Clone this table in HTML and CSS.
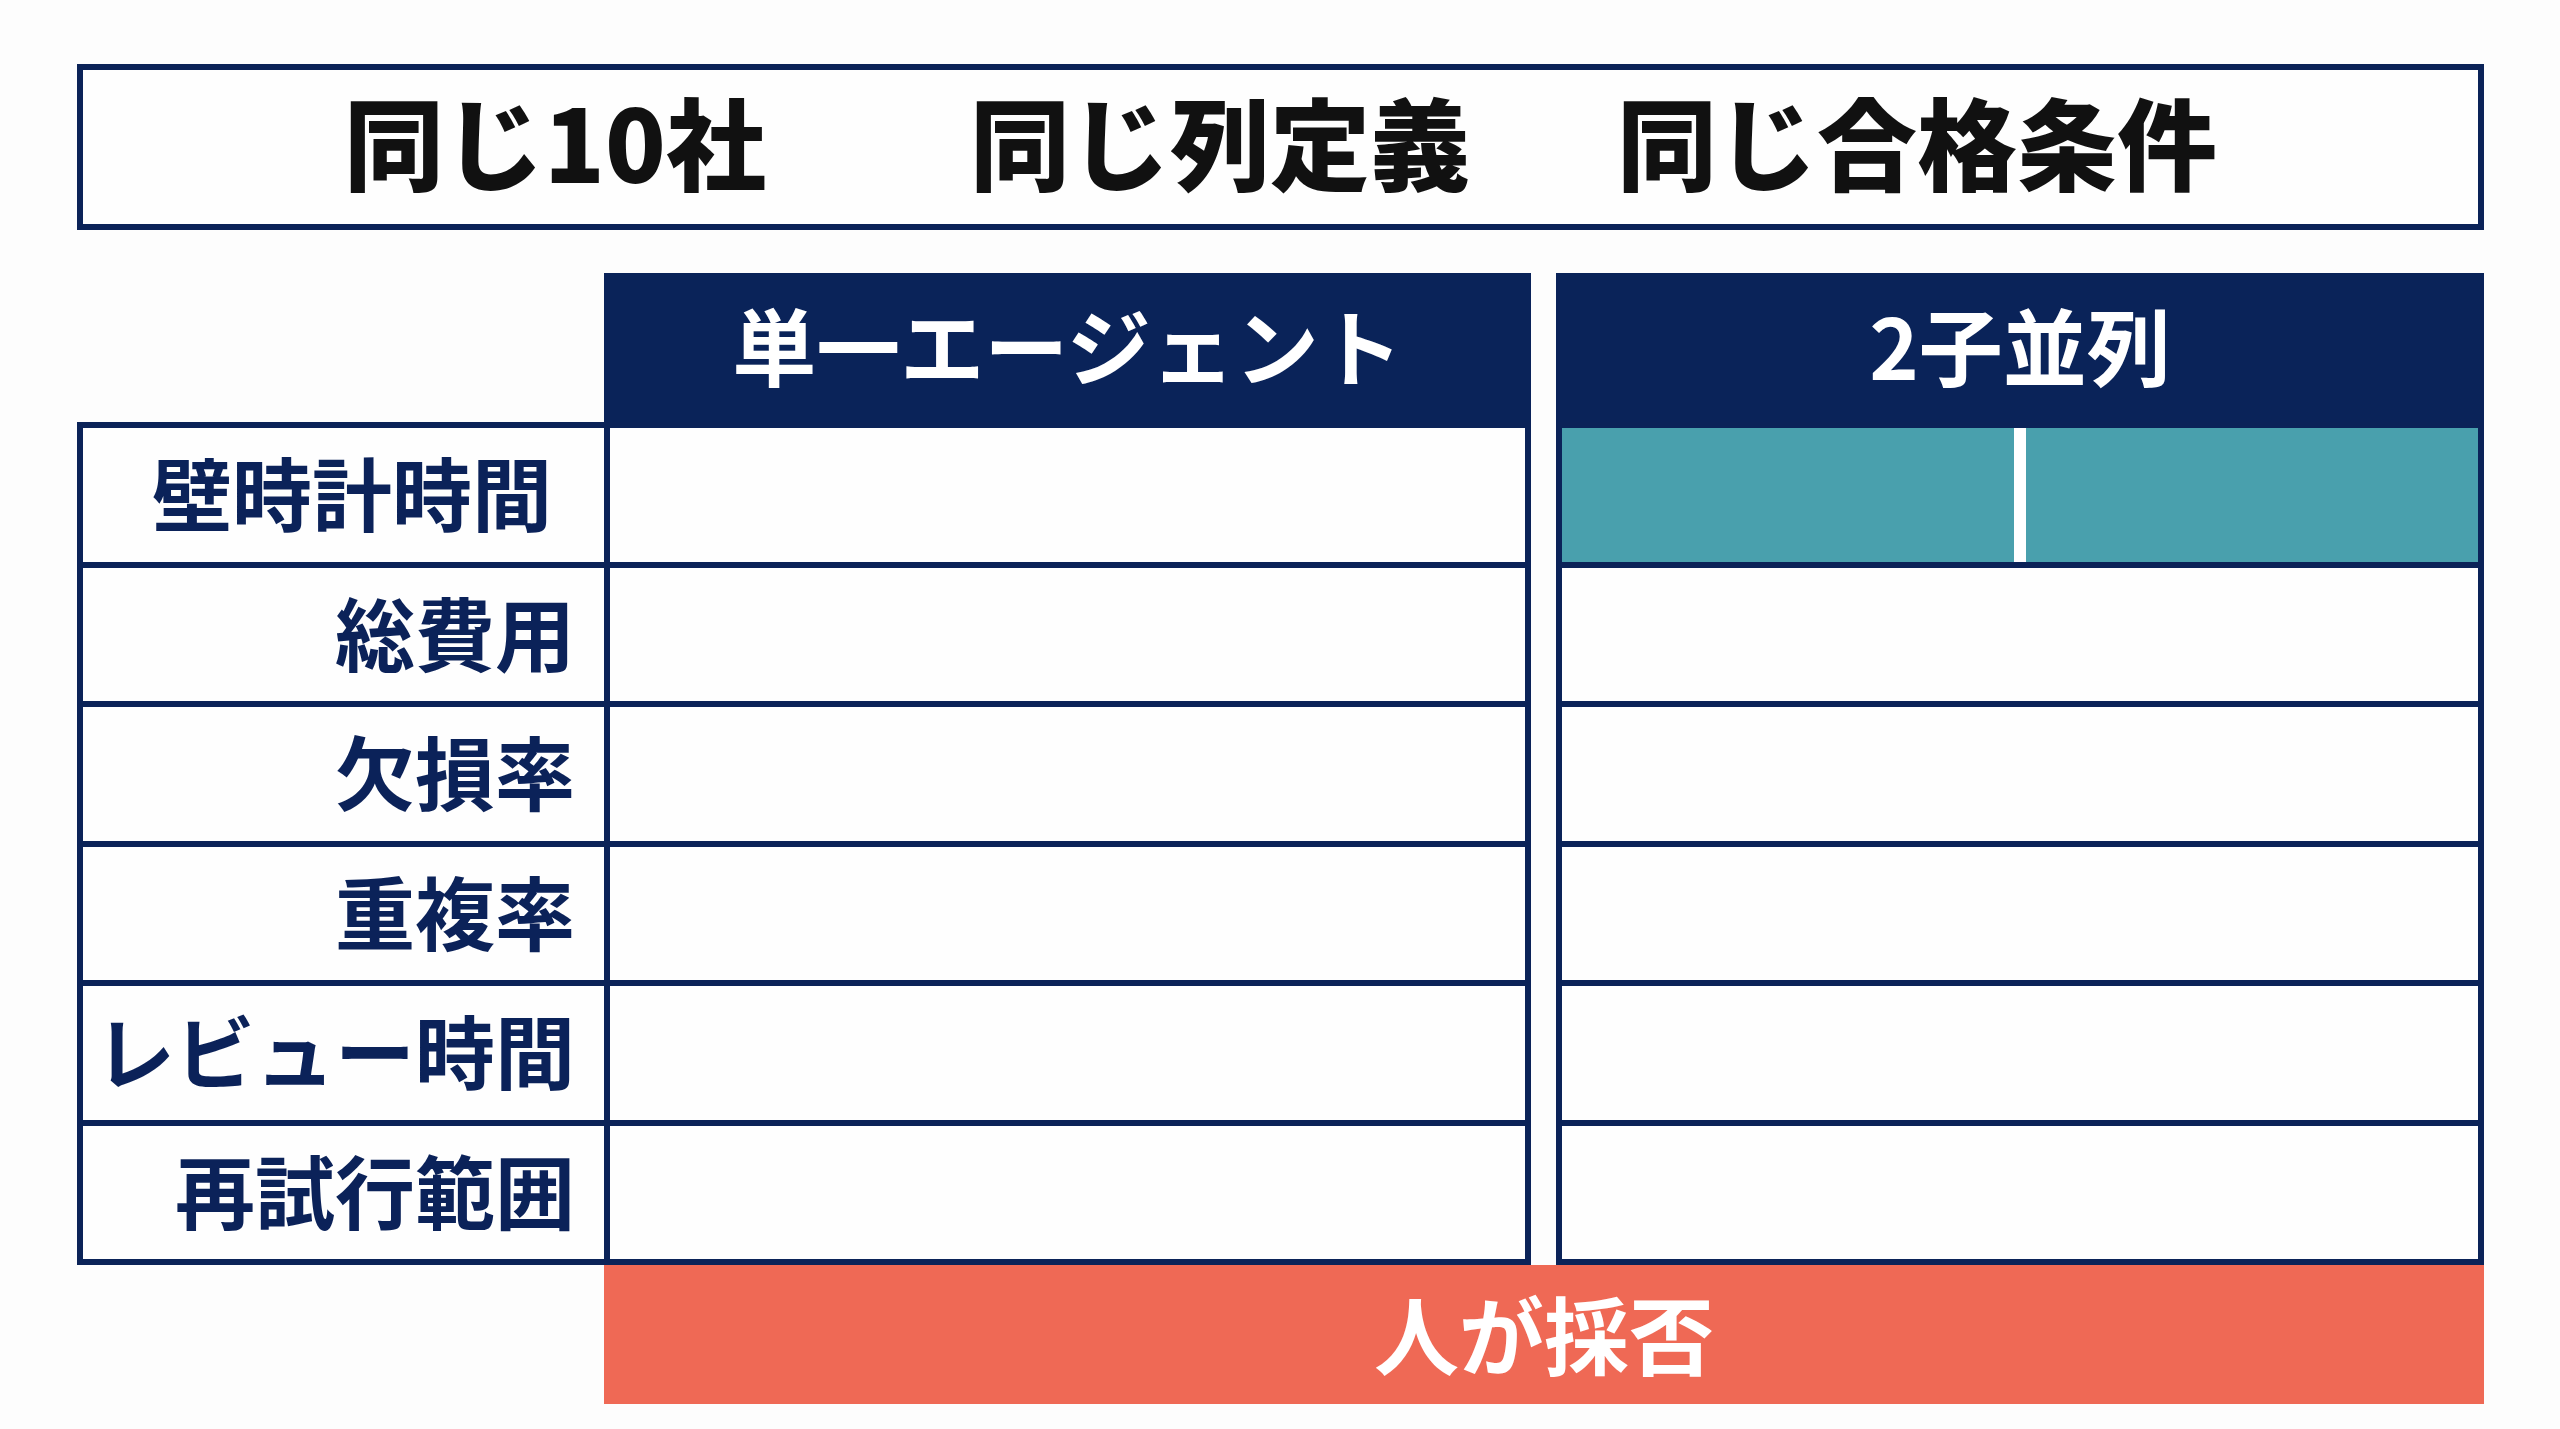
FILE: index.html
```html
<!DOCTYPE html>
<html lang="ja">
<head>
<meta charset="utf-8">
<link rel="stylesheet" href="styles.css">
</head>
<body>
<div class="page">
  <div class="banner">
    <span class="bt">同じ10社</span>
    <span class="bt b2">同じ列定義</span>
    <span class="bt b3">同じ合格条件</span>
  </div>
  <div class="grid">
    <div class="spacer"></div>
    <div class="head h1">単一エージェント</div>
    <div class="head h2">2子並列</div>
    <div class="labels">
      <div class="lrow first">壁時計時間</div>
      <div class="lrow">総費用</div>
      <div class="lrow">欠損率</div>
      <div class="lrow">重複率</div>
      <div class="lrow">レビュー時間</div>
      <div class="lrow">再試行範囲</div>
    </div>
    <div class="col c1">
      <div class="drow"></div>
      <div class="drow"></div>
      <div class="drow"></div>
      <div class="drow"></div>
      <div class="drow"></div>
      <div class="drow"></div>
    </div>
    <div class="col c2">
      <div class="drow teal"><div class="half"></div><div class="half"></div></div>
      <div class="drow"></div>
      <div class="drow"></div>
      <div class="drow"></div>
      <div class="drow"></div>
      <div class="drow"></div>
    </div>
    <div class="spacer"></div>
    <div class="verdict">人が採否</div>
  </div>
</div>
</body>
</html>
```
FILE: styles.css
```css
html, body {
  margin: 0;
  padding: 0;
  background: #fdfdfd;
}
body {
  font-family: "Noto Sans CJK JP", "Noto Sans", sans-serif;
  width: 2560px;
  height: 1429px;
  overflow: hidden;
}
.page {
  padding: 64px 0 0 77px;
}
.banner {
  box-sizing: border-box;
  width: 2407px;
  height: 166px;
  border: 6px solid #0b2358;
  background: #fefefe;
  display: flex;
  align-items: center;
  justify-content: center;
  padding-bottom: 14px;
  margin-bottom: 43px;
}
.bt {
  font-size: 100px;
  font-weight: 900;
  line-height: 1;
  color: #111111;
}
.b2 { margin-left: 204px; }
.b3 { margin-left: 147px; }

.grid {
  display: grid;
  grid-template-columns: 527px 927px 25px 928px;
  grid-template-rows: 149px auto 139px;
}
.head {
  box-sizing: border-box;
  background: #0a2359;
  color: #ffffff;
  font-size: 84px;
  font-weight: 700;
  line-height: 1;
  display: flex;
  align-items: center;
  justify-content: center;
  padding-bottom: 8px;
}
.h2 { grid-column: 4; }

.labels {
  border: 6px solid #0b2358;
  border-right: none;
  background: #fefefe;
}
.lrow {
  box-sizing: border-box;
  height: 139.5px;
  border-bottom: 6px solid #0b2358;
  display: flex;
  align-items: center;
  justify-content: flex-end;
  padding-right: 29px;
  padding-bottom: 9px;
  font-size: 80px;
  font-weight: 700;
  line-height: 1;
  color: #0b2259;
}
.lrow:last-child { border-bottom: none; height: 133.5px; }
.lrow.first { padding-right: 52px; }

.col {
  border: 6px solid #0b2358;
  background: #fefefe;
}
.c2 { grid-column: 4; }
.drow {
  height: 133.5px;
  border-bottom: 6px solid #0b2358;
}
.drow:last-child { border-bottom: none; }
.teal {
  display: flex;
  gap: 12px;
  background: #ffffff;
}
.half {
  flex: 1;
  background: #49a0ad;
}

.verdict {
  box-sizing: border-box;
  grid-column: 2 / 5;
  background: #ef6955;
  color: #ffffff;
  font-size: 85px;
  font-weight: 700;
  line-height: 1;
  display: flex;
  align-items: center;
  justify-content: center;
  padding-bottom: 6px;
}
```
